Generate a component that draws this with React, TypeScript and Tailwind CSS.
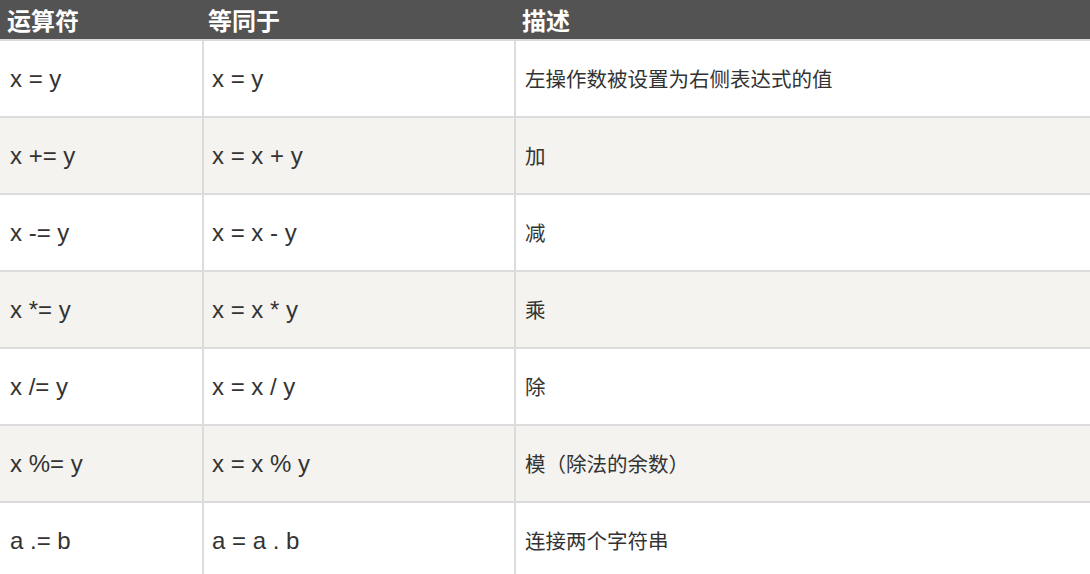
const rows = [
  { op: 'x = y', eq: 'x = y', desc: '左操作数被设置为右侧表达式的值' },
  { op: 'x += y', eq: 'x = x + y', desc: '加' },
  { op: 'x -= y', eq: 'x = x - y', desc: '减' },
  { op: 'x *= y', eq: 'x = x * y', desc: '乘' },
  { op: 'x /= y', eq: 'x = x / y', desc: '除' },
  { op: 'x %= y', eq: 'x = x % y', desc: '模（除法的余数）' },
  { op: 'a .= b', eq: 'a = a . b', desc: '连接两个字符串' },
];

const latin = "font-['Liberation_Sans',Arial,sans-serif] text-[24px]";
const cjk = "font-['Noto_Sans_CJK_SC',sans-serif] text-[20.5px]";

export default function App() {
  return (
    <div className="w-[1090px] h-[574px] overflow-hidden bg-white text-[#333333]">
      {/* Header */}
      <div className="flex h-[41px] bg-[#535353] border-b-2 border-[#dadada] text-white font-bold font-['Noto_Sans_CJK_SC',sans-serif] text-[24px] leading-none">
        <div className="w-[204px] pl-[7px] flex items-center">运算符</div>
        <div className="w-[312px] pl-[4px] flex items-center">等同于</div>
        <div className="flex-1 pl-[6px] flex items-center">描述</div>
      </div>

      {/* Rows */}
      {rows.map((r, i) => (
        <div
          key={i}
          className={`flex h-[77px] border-b-2 border-[#dcdcdc] ${i % 2 === 1 ? 'bg-[#f4f3f0]' : 'bg-white'}`}
        >
          <div className={`w-[204px] pl-[10px] flex items-center border-r-2 border-[#dcdcdc] ${latin}`}>{r.op}</div>
          <div className={`w-[312px] pl-[8px] flex items-center border-r-2 border-[#dcdcdc] ${latin}`}>{r.eq}</div>
          <div className={`flex-1 pl-[9px] flex items-center ${cjk}`}>{r.desc}</div>
        </div>
      ))}
    </div>
  );
}
